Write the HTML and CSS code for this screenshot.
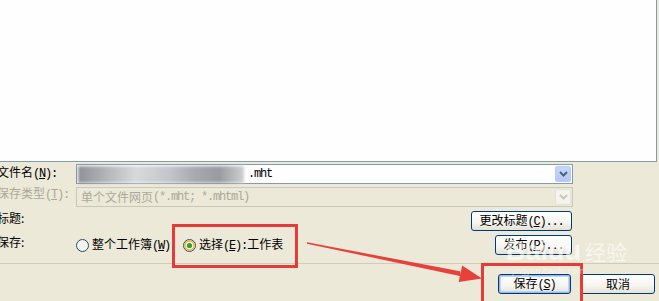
FILE: index.html
```html
<!DOCTYPE html>
<html lang="zh">
<head>
<meta charset="utf-8">
<link rel="stylesheet" href="styles.css">
</head>
<body>
<div class="page">
  <div class="list"></div>
  <div class="form">
    <div class="row r1">
      <div class="label up1">文件名<span class="a">(<u>N</u>):</span></div>
      <div class="combo">
        <div class="field"><span class="blur"></span><span class="fname a">.mht</span></div>
        <div class="dd"><svg width="9" height="6" viewBox="0 0 9 6"><path d="M1 1 L4.5 4.5 L8 1" fill="none" stroke="#4d6185" stroke-width="2"/></svg></div>
      </div>
    </div>
    <div class="row r2">
      <div class="label dim up">保存类型<span class="a">(<u>T</u>):</span></div>
      <div class="combo disabled">
        <div class="field dimtext">单个文件网页<span class="a">(*.mht; *.mhtml)</span></div>
        <div class="dd"><svg width="9" height="6" viewBox="0 0 9 6"><path d="M1 1 L4.5 4.5 L8 1" fill="none" stroke="#c9c7ba" stroke-width="2"/></svg></div>
      </div>
    </div>
    <div class="row r3">
      <div class="label up">标题:</div>
      <div class="spacer"></div>
      <button class="btn w-title">更改标题<span class="a">(<u>C</u>)...</span></button>
    </div>
    <div class="row r4">
      <div class="label up">保存:</div>
      <label class="radio">
        <svg width="13" height="13" viewBox="0 0 13 13"><circle cx="6.5" cy="6.5" r="6" fill="#f4f3ee" stroke="#1c5180"/></svg>
        <span>整个工作簿<span class="a">(<u>W</u>)</span></span>
      </label>
      <label class="radio marked">
        <svg width="13" height="13" viewBox="0 0 13 13"><circle cx="6.5" cy="6.5" r="6" fill="#f4f3ee" stroke="#1c5180"/><circle cx="6.5" cy="6.5" r="4.6" fill="none" stroke="#f8b334" stroke-width="1.6"/><circle cx="6.5" cy="6.5" r="2.6" fill="#2ea22e"/></svg>
        <span>选择<span class="a">(<u>E</u>):</span>工作表</span>
      </label>
      <div class="spacer"></div>
      <button class="btn w-pub">发布<span class="a">(<u>P</u>)...</span></button>
    </div>
    <div class="sep"></div>
    <div class="row r5">
      <div class="spacer"></div>
      <span class="mark-save"><button class="btn default w-save">保存<span class="a">(<u>S</u>)</span></button></span>
      <button class="btn w-cancel">取消</button>
    </div>
  </div>
  <div class="watermark"><span class="wm-big">Bai<span class="wm-du">du</span></span><span class="wm-cn">经验</span><span class="wm-url">jingyan.baidu.com</span></div>
  <svg class="arrow" width="659" height="301" viewBox="0 0 659 301">
    <polygon points="307,242.3 307,243.7 461,276.2 460,271.2" fill="#e8413b"/>
    <polygon points="482,278.5 458.6,282 462.2,265.6" fill="#e8413b"/>
  </svg>
</div>
</body>
</html>
```
FILE: styles.css
```css
* { box-sizing: border-box; }
html, body { margin: 0; padding: 0; }
body {
  background: #ece9d8;
  font-family: "Noto Sans CJK SC", "DejaVu Sans", sans-serif;
  font-size: 12px;
  color: #000;
  width: 659px;
  height: 301px;
  overflow: hidden;
}
.page { position: relative; width: 659px; height: 301px; }
.list {
  width: 657px;
  height: 162px;
  background: #fefefe;
  border-right: 1px solid #7f9db9;
  border-bottom: 1px solid #7f9db9;
}
.form { display: flex; flex-direction: column; padding-top: 2px; }
.row { display: flex; align-items: center; height: 20px; padding-right: 87px; }
.r2 { margin-top: 3px; }
.r3 { margin-top: 4px; }
.r4 { margin-top: 4px; }
.label {
  flex: 0 0 79px;
  margin-left: -3px;
  line-height: 14px;
  white-space: nowrap;
}
.label.up { margin-top: -7px; }
.label.up1 { margin-top: -3px; }
.a {
  font-family: "Liberation Mono", monospace;
  font-size: 12px;
  letter-spacing: -1.2px;
}
.dim, .dimtext { color: #aca899; }
u { text-decoration: underline; }
.spacer { flex: 1; }
.combo {
  flex: 0 0 497px;
  height: 20px;
  display: flex;
  align-items: center;
  border: 1px solid #7f9db9;
  background: #fff;
  padding: 1px;
}
.combo.disabled { border-color: #c9c7ba; background: #ece9d8; }
.field {
  flex: 1;
  display: flex;
  align-items: center;
  height: 16px;
  padding-left: 3px;
  line-height: 14px;
  white-space: pre;
}
.blur {
  width: 166px;
  height: 17px;
  margin-left: -3px;
  background: linear-gradient(90deg, #8f9196 0%, #b9bbbe 20%, #d8d9db 35%, #c4c5c8 55%, #a9aaad 70%, #9a9b9e 85%, #cfd0d2 100%);
  filter: blur(1.5px);
}
.fname { margin-left: 4px; }
.dd {
  flex: 0 0 16px;
  height: 16px;
  display: flex;
  align-items: center;
  justify-content: center;
  background: linear-gradient(180deg, #c6d6fb, #b4c8f6);
  border: 1px solid #b9cbf3;
  border-radius: 2px;
}
.disabled .dd { background: #f4f3ee; border-color: #e3e1d8; }
.btn {
  height: 20px;
  padding: 0;
  border: 1px solid #003c74;
  border-radius: 3px;
  background: linear-gradient(180deg, #ffffff 0%, #f6f5f0 60%, #e4e1d4 100%);
  font-family: "Noto Sans CJK SC", sans-serif;
  font-size: 12px;
  line-height: 14px;
  color: #000;
  white-space: nowrap;
}
.btn.default { box-shadow: inset 0 0 0 1px #9cb8ea, inset 0 0 0 2px #c2d4f6; }
.w-title { width: 101px; }
.w-pub { width: 77px; }
.w-save { width: 73px; }
.w-cancel { width: 74px; margin-left: 10px; }
.r5 { margin-top: 10px; padding-right: 4px; }
.radio { display: flex; align-items: center; gap: 3px; line-height: 14px; white-space: nowrap; }
.radio.marked { margin-left: 13px; position: relative; }
.radio.marked::after {
  content: "";
  position: absolute;
  left: -11px;
  top: -13px;
  width: 120px;
  height: 38px;
  border: 3px solid #e53c3a;
}
.sep { height: 1px; background: #d0ccb8; margin-top: 8px; }
.mark-save { position: relative; display: flex; }
.mark-save::after {
  content: "";
  position: absolute;
  left: -17px;
  top: -11px;
  width: 96px;
  height: 35px;
  border: 3px solid #e53c3a;
}
.arrow { position: absolute; left: 0; top: 0; pointer-events: none; }
.watermark {
  position: absolute;
  left: 506px;
  top: 238px;
  color: rgba(255,255,255,0.6);
  pointer-events: none;
}
.wm-big { font-family: "Liberation Sans", sans-serif; font-weight: bold; font-size: 27px; line-height: 27px; }
.wm-cn { font-size: 21px; line-height: 27px; margin-left: 4px; vertical-align: top; }
.wm-url { position: absolute; left: 6px; top: 28px; font-family: "Liberation Sans", sans-serif; font-size: 9px; white-space: nowrap; color: rgba(255,255,255,0.5); }
```
